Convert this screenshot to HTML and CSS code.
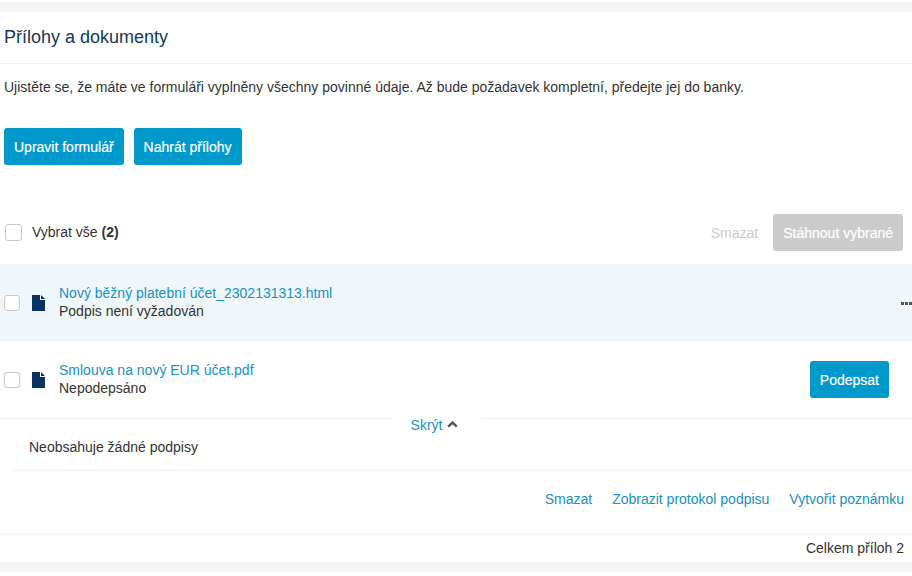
FILE: index.html
```html
<!DOCTYPE html>
<html lang="cs">
<head>
<meta charset="utf-8">
<title>Přílohy a dokumenty</title>
<link rel="stylesheet" href="styles.css">
</head>
<body>
<main class="panel">
  <h1 class="title">Přílohy a dokumenty</h1>
  <p class="intro">Ujistěte se, že máte ve formuláři vyplněny všechny povinné údaje. Až bude požadavek kompletní, předejte jej do banky.</p>
  <div class="actions">
    <a class="btn">Upravit formulář</a>
    <a class="btn">Nahrát přílohy</a>
  </div>
  <div class="select-bar">
    <span class="check check-all"></span>
    <span class="select-label">Vybrat vše <b>(2)</b></span>
    <span class="spacer"></span>
    <span class="muted-link">Smazat</span>
    <a class="btn btn-disabled">Stáhnout vybrané</a>
  </div>
  <section class="file file-active">
    <span class="check"></span>
    <svg class="file-icon" width="13" height="16" viewBox="0 0 13 16"><path d="M0 0H8V5H13V16H0Z M9 0L13 4H9Z" fill="#0a3260"/></svg>
    <div class="file-text">
      <a class="link">Nový běžný platební účet_2302131313.html</a>
      <div>Podpis není vyžadován</div>
    </div>
    <span class="dots"><i></i><i></i><i></i></span>
  </section>
  <section class="file">
    <span class="check"></span>
    <svg class="file-icon" width="13" height="16" viewBox="0 0 13 16"><path d="M0 0H8V5H13V16H0Z M9 0L13 4H9Z" fill="#0a3260"/></svg>
    <div class="file-text">
      <a class="link">Smlouva na nový EUR účet.pdf</a>
      <div>Nepodepsáno</div>
    </div>
    <a class="btn btn-sign">Podepsat</a>
  </section>
  <div class="details">
    <div class="toggle-wrap">
      <a class="toggle"><span class="link">Skrýt</span>
        <svg class="chevron" width="11" height="7" viewBox="0 0 11 7"><path d="M1.2 5.6L5.5 1.6L9.8 5.6" fill="none" stroke="#555" stroke-width="2.4"/></svg>
      </a>
    </div>
    <div class="signatures">Neobsahuje žádné podpisy</div>
    <div class="detail-links">
      <a class="link">Smazat</a>
      <a class="link">Zobrazit protokol podpisu</a>
      <a class="link">Vytvořit poznámku</a>
    </div>
  </div>
  <footer class="total">Celkem příloh 2</footer>
</main>
</body>
</html>
```
FILE: styles.css
```css
* { box-sizing: border-box; }
html, body { margin: 0; height: 576px; overflow: hidden; background: #fff; }
body {
  padding: 2px 0 4px;
  font-family: "Liberation Sans", Arial, sans-serif;
  font-size: 14px;
  line-height: 18px;
  color: #333;
}
.panel {
  height: 570px;
  background: #fff;
  border-top: 10px solid #f4f4f4;
  border-bottom: 10px solid #f4f4f4;
}
.title {
  margin: 0;
  height: 52px;
  padding: 15px 4px 0;
  font-size: 18px;
  line-height: 20px;
  font-weight: 400;
  color: #12395b;
  border-bottom: 1px solid #f0f0f0;
}
.intro { margin: 0; padding: 14px 4px 0; height: 64px; }
.actions { display: flex; gap: 10px; padding-left: 4px; }
.btn {
  display: flex;
  align-items: center;
  height: 37px;
  padding: 0 10px;
  border-radius: 3px;
  background: #0099cc;
  color: #fff;
  font-weight: 400;
  -webkit-text-stroke: 0.2px #fff;
}
.select-bar {
  display: flex;
  align-items: center;
  height: 37px;
  margin-top: 49px;
  padding: 0 9px 0 5px;
}
.spacer { flex: 1; }
.select-label { margin: 0 0 2px 10px; }
.muted-link { color: #ccc; margin-right: 15px; }
.btn-disabled { background: #ccc; }
.check {
  flex: none;
  width: 16px;
  height: 16px;
  border: 1px solid #c8c8c8;
  border-radius: 3px;
  background: #fff;
}
.check-all { width: 17px; height: 17px; }
.file {
  display: flex;
  align-items: center;
  height: 77px;
  padding: 0 23px 1px 4px;
  border-bottom: 1px solid #f0f0f0;
}
.file-active {
  margin-top: 13px;
  padding: 0 0 0 4px;
  background: #eff7fd;
  border-bottom: 0;
  height: 78px;
}
.file-icon { flex: none; margin-left: 12px; }
.file-text { flex: 1; margin: 0 0 2px 14px; }
.link { color: #2090bd; }
.dots { display: flex; gap: 1px; }
.dots i { display: block; width: 3px; height: 3px; background: #555; }
.details { padding-left: 14px; }
.toggle-wrap { display: flex; justify-content: center; height: 18px; margin-top: -2px; padding-right: 52px; }
.toggle {
  display: flex;
  align-items: center;
  gap: 5px;
  height: 15px;
  padding: 0 24px 0 19px;
  background: #fff;
}
.signatures {
  height: 36px;
  padding: 3px 0 0 15px;
  border-bottom: 1px solid #f0f0f0;
}
.detail-links {
  display: flex;
  justify-content: flex-end;
  gap: 20px;
  height: 63px;
  padding: 19px 8px 0 0;
}
.total { padding: 4px 8px 0; text-align: right; border-top: 1px solid #f0f0f0; }
```
